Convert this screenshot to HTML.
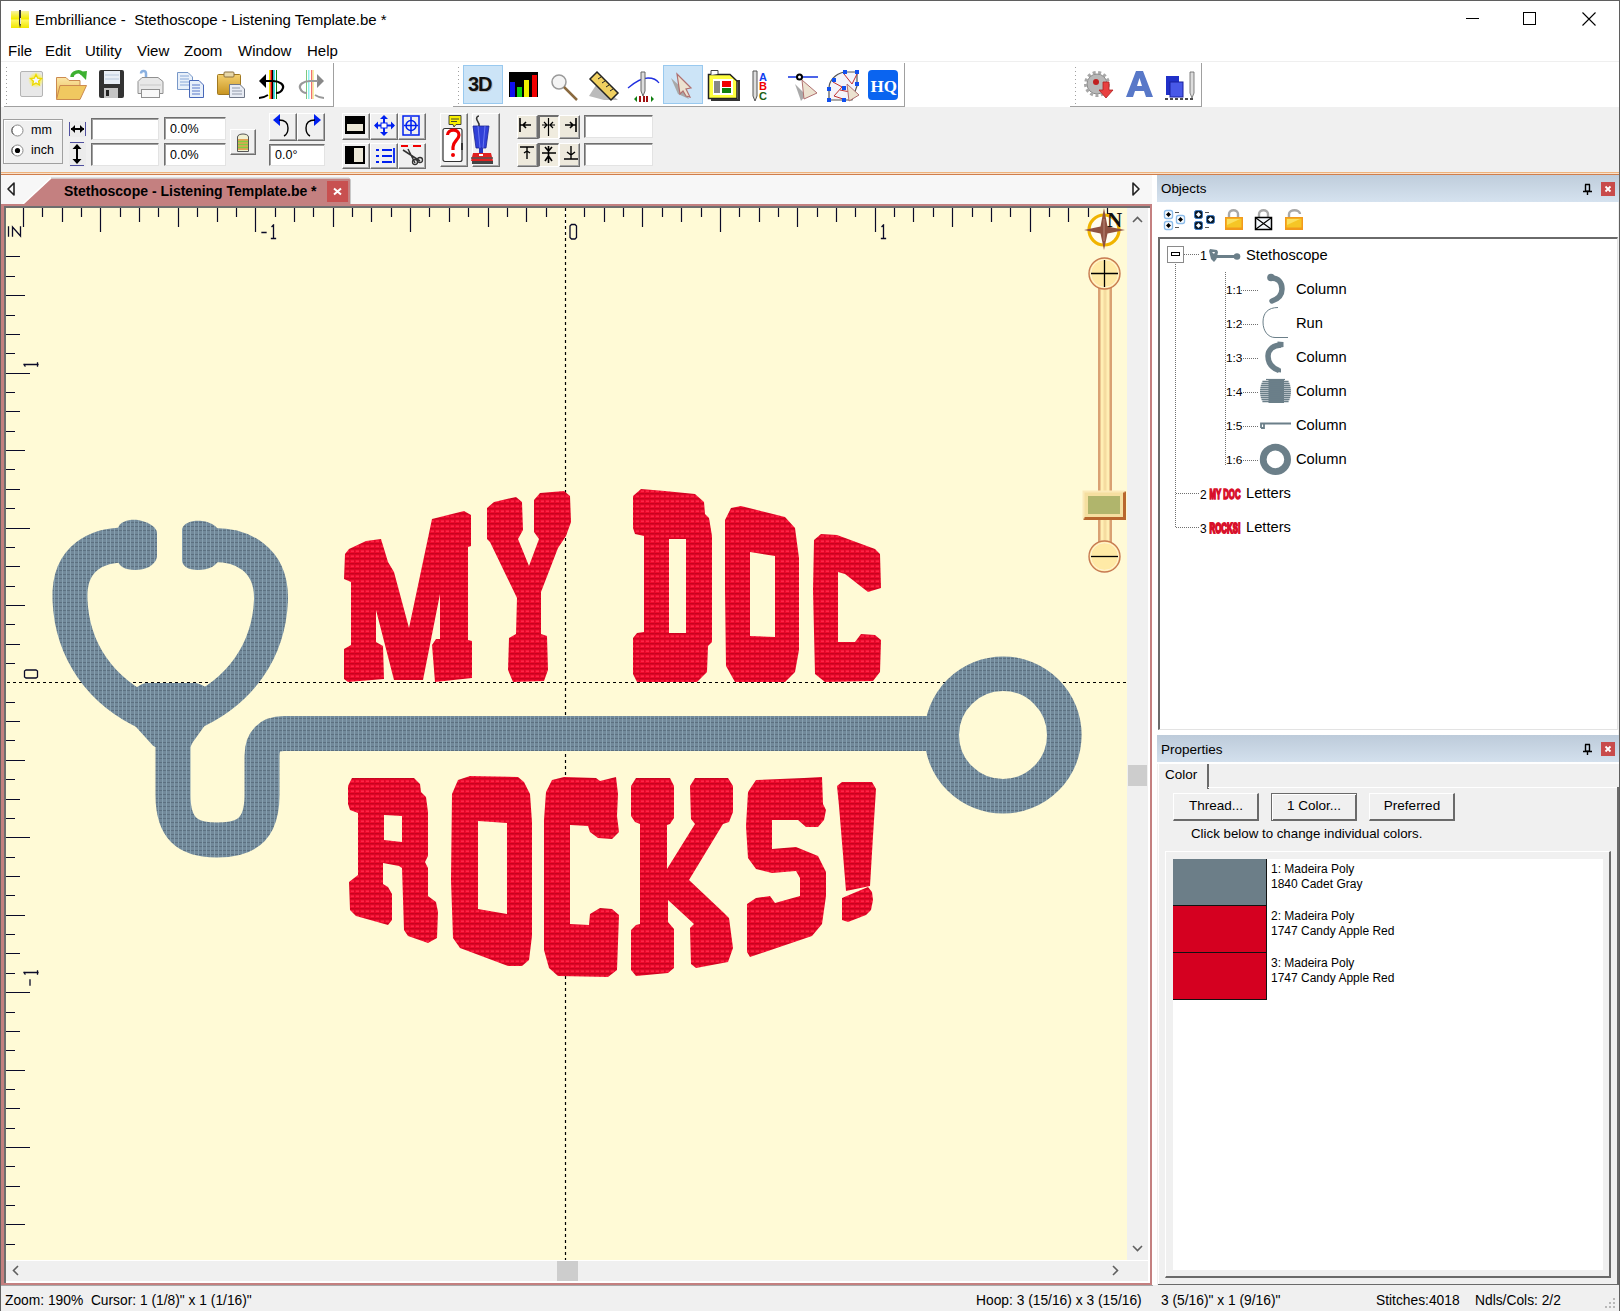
<!DOCTYPE html>
<html><head><meta charset="utf-8">
<style>
*{box-sizing:border-box;margin:0;padding:0}
html,body{width:1620px;height:1311px;overflow:hidden;background:#fff;font-family:"Liberation Sans",sans-serif;color:#000}
.a{position:absolute}
.t{position:absolute;white-space:nowrap;line-height:1}
.btn{position:absolute;background:#f0f0f0;border-top:1px solid #fff;border-left:1px solid #fff;border-right:1px solid #6f6f6f;border-bottom:1px solid #6f6f6f;box-shadow:inset -1px -1px 0 #a8a8a8}
.inp{position:absolute;background:#fff;border-top:1px solid #6f6f6f;border-left:1px solid #6f6f6f;border-right:1px solid #e3e3e3;border-bottom:1px solid #e3e3e3;box-shadow:inset 1px 1px 0 #a0a0a0}
svg{position:absolute;overflow:visible}
</style></head><body>
<!-- window border -->
<div class="a" style="left:0;top:0;width:1620px;height:1311px;border:1px solid #5f5f5f;border-bottom:none"></div>
<!-- title bar -->
<svg style="left:11px;top:10px" width="18" height="18"><defs><linearGradient id="ig" x1="0" y1="0" x2="0" y2="1"><stop offset="0" stop-color="#f8f4a0"/><stop offset="0.45" stop-color="#f4ec00"/><stop offset="0.55" stop-color="#fff860"/><stop offset="1" stop-color="#f0e600"/></linearGradient></defs><rect x="0" y="1" width="18" height="17" fill="url(#ig)"/><path d="M8 0L10 0L10 14L9 18L8 14Z" fill="#333"/><rect x="9" y="8" width="1" height="6" fill="#ddd"/></svg>
<div class="t" style="left:35px;top:12px;font-size:15px">Embrilliance -&nbsp; Stethoscope - Listening Template.be *</div>
<div class="a" style="left:1466px;top:18px;width:13px;height:1px;background:#000"></div>
<div class="a" style="left:1523px;top:12px;width:13px;height:13px;border:1px solid #000"></div>
<svg style="left:1582px;top:12px" width="14" height="14"><path d="M0.5 0.5L13.5 13.5M13.5 0.5L0.5 13.5" stroke="#000" stroke-width="1.1"/></svg>
<!-- menu -->
<div class="t" style="left:8px;top:43px;font-size:15px">File</div>
<div class="t" style="left:45px;top:43px;font-size:15px">Edit</div>
<div class="t" style="left:85px;top:43px;font-size:15px">Utility</div>
<div class="t" style="left:137px;top:43px;font-size:15px">View</div>
<div class="t" style="left:184px;top:43px;font-size:15px">Zoom</div>
<div class="t" style="left:238px;top:43px;font-size:15px">Window</div>
<div class="t" style="left:307px;top:43px;font-size:15px">Help</div>
<!-- toolbar row 1 -->
<div class="a" style="left:1px;top:61px;width:1618px;height:2px;background:#efefef"></div>
<div class="a" style="left:1px;top:62px;width:1618px;height:45px;background:#fff"></div>
<div class="a" style="left:4px;top:63px;width:330px;height:44px;background:#fff;border-right:1px solid #a0a0a0;border-bottom:1px solid #a0a0a0"></div>
<div class="a" style="left:453px;top:63px;width:452px;height:44px;background:#fff;border-right:1px solid #a0a0a0;border-bottom:1px solid #a0a0a0"></div>
<div class="a" style="left:1070px;top:63px;width:132px;height:44px;background:#fff;border-right:1px solid #a0a0a0;border-bottom:1px solid #a0a0a0"></div>
<svg style="left:0;top:0" width="1620" height="120">
<g fill="#a0a0a0">
<path d="M6 67h1v1h-1zM6 71h1v1h-1zM6 75h1v1h-1zM6 79h1v1h-1zM6 83h1v1h-1zM6 87h1v1h-1zM6 91h1v1h-1zM6 95h1v1h-1zM6 99h1v1h-1zM6 103h1v1h-1z"/>
<path d="M458 67h1v1h-1zM458 71h1v1h-1zM458 75h1v1h-1zM458 79h1v1h-1zM458 83h1v1h-1zM458 87h1v1h-1zM458 91h1v1h-1zM458 95h1v1h-1zM458 99h1v1h-1zM458 103h1v1h-1z"/>
<path d="M1075 67h1v1h-1zM1075 71h1v1h-1zM1075 75h1v1h-1zM1075 79h1v1h-1zM1075 83h1v1h-1zM1075 87h1v1h-1zM1075 91h1v1h-1zM1075 95h1v1h-1zM1075 99h1v1h-1zM1075 103h1v1h-1z"/>
</g></svg>
<!-- toolbar row 2 -->
<div class="a" style="left:1px;top:107px;width:1618px;height:65px;background:#f0f0f0"></div>
<div class="a" style="left:1px;top:172px;width:1618px;height:1px;background:#eeb27c"></div>
<div class="a" style="left:1px;top:173px;width:1618px;height:1px;background:#f8e2cc"></div>
<div class="a" style="left:1px;top:174px;width:1618px;height:1px;background:#cf7d4c"></div>
<!-- tab strip -->
<div class="a" style="left:1px;top:175px;width:1151px;height:29px;background:#f7f7f7"></div>
<svg style="left:0;top:175px" width="1152" height="31">
<path d="M23 29 L51 3.5 L349 3.5 L350 4.5 L350 29 Z" fill="#c48080"/>
<path d="M23 29 L51 3" stroke="#ffffff" stroke-width="1.5"/>
<path d="M51 3 L349 3 L350.5 4.5 L350.5 29" stroke="#c8c8c8" stroke-width="1" fill="none"/>
<rect x="327" y="6" width="21" height="21" fill="#c85050"/>
<path d="M334 13.5L341 19.5M341 13.5L334 19.5" stroke="#fff" stroke-width="2"/>
<path d="M14 8 L14 20 L8 14 Z" fill="none" stroke="#222" stroke-width="1.6" stroke-linejoin="round"/>
<path d="M1133 8 L1133 20 L1139 14 Z" fill="none" stroke="#222" stroke-width="1.6" stroke-linejoin="round"/>
</svg>
<div class="t" style="left:64px;top:184px;font-size:14px;font-weight:bold">Stethoscope - Listening Template.be *</div>
<svg style="left:0;top:60px" width="1210" height="50">
<defs>
<radialGradient id="glow"><stop offset="0.5" stop-color="#f8f060"/><stop offset="1" stop-color="#f8f060" stop-opacity="0"/></radialGradient>
<linearGradient id="fold" x1="0" y1="0" x2="0" y2="1"><stop offset="0" stop-color="#fbe6a6"/><stop offset="1" stop-color="#e8b84a"/></linearGradient>
<linearGradient id="gold" x1="0" y1="0" x2="0" y2="1"><stop offset="0" stop-color="#f4d070"/><stop offset="1" stop-color="#c89420"/></linearGradient>
</defs>
<!-- New -->
<rect x="20.5" y="11.5" width="22" height="25" rx="1.5" fill="#e8e8e8" stroke="#b4b4b4"/>
<circle cx="36" cy="20" r="8" fill="url(#glow)"/>
<path d="M36 14.5L37.7 18.2L41.5 18.6L38.6 21.2L39.4 25L36 23L32.6 25L33.4 21.2L30.5 18.6L34.3 18.2Z" fill="#f4f6ff" stroke="#ecd800" stroke-width="1.3"/>
<!-- Open -->
<path d="M56.5 17.5H66L69 20.5H80V38.5H56.5Z" fill="url(#fold)" stroke="#cc8a50"/>
<path d="M60 25.5H86.5L80 39.5H56.5Z" fill="#f0c860" stroke="#cc8a50"/>
<path d="M72 17C72 12 80 10 82 14" stroke="#3cb030" stroke-width="3.5" fill="none"/>
<path d="M78 12L87 11L86 20Z" fill="#3cb030"/>
<!-- Save -->
<rect x="99" y="10" width="25" height="28" rx="2" fill="#333"/>
<rect x="104" y="11" width="16" height="13" fill="#e8eef6"/>
<path d="M105 15H119M105 19H119" stroke="#b8c8dc"/>
<rect x="104" y="28" width="14" height="10" fill="#c4c4c4"/>
<rect x="106" y="30" width="3" height="6" fill="#222"/>
<!-- Print -->
<path d="M141 13.5C141 10 146 10 146 13.5V18" stroke="#8ab0e0" stroke-width="2.5" fill="none"/>
<path d="M138 21.5L142 17.5H158L163 21.5V33.5H138Z" fill="#e8e8e8" stroke="#909090"/>
<rect x="141.5" y="29.5" width="18" height="8" fill="#f8f8f8" stroke="#909090"/>
<path d="M140 25H161" stroke="#c8c8c8"/>
<!-- Copy -->
<path d="M177.5 12.5H188L192.5 17V29.5H177.5Z" fill="#e8f0fa" stroke="#7898c8"/>
<path d="M180 16H189M180 19H189M180 22H189M180 25H189" stroke="#88a8d8"/>
<path d="M189.5 20.5H199L203.5 25V37.5H189.5Z" fill="#e8f0fa" stroke="#4868b8"/>
<path d="M192 25H200M192 28H200M192 31H200M192 34H200" stroke="#5878c8"/>
<!-- Paste -->
<rect x="217.5" y="14.5" width="23" height="20" rx="1" fill="url(#gold)" stroke="#a07820"/>
<rect x="224" y="12" width="10" height="5" rx="1" fill="#e8d8a8" stroke="#8a7040"/>
<path d="M229.5 24.5H240L244.5 29V37.5H229.5Z" fill="#e8ecf4" stroke="#707888"/>
<path d="M232 28H240M232 31H242M232 34H242" stroke="#9098a8"/>
<!-- Reverse 1 -->
<rect x="269" y="10" width="1.5" height="29" fill="#f8e800"/>
<rect x="270.5" y="10" width="1.5" height="29" fill="#e00000"/>
<rect x="272" y="10" width="1.5" height="29" fill="#000"/>
<rect x="273.5" y="10" width="1.5" height="29" fill="#30e8f0"/>
<rect x="276" y="10" width="1" height="29" fill="#108010"/>
<path d="M259 21L266 14V28Z" fill="#000"/>
<path d="M265 21H273C280 21 284 25 283 28C282 31 279 33 276 33" stroke="#000" stroke-width="2.2" fill="none"/>
<path d="M259 38C262 38 265 37 268 35" stroke="#000" stroke-width="1.8" fill="none"/>
<!-- Reverse 2 -->
<rect x="306" y="10" width="1" height="29" fill="#80c880"/>
<rect x="308" y="10" width="1.5" height="29" fill="#90f0f0"/>
<rect x="311" y="10" width="1.5" height="29" fill="#f07070"/>
<rect x="312.5" y="10" width="1.5" height="29" fill="#f8f0a0"/>
<path d="M324 21L317 14V28Z" fill="#888"/>
<path d="M318 21H310C303 21 299 25 300 28C301 31 304 33 307 33" stroke="#999" stroke-width="2.2" fill="none"/>
<path d="M324 38C321 38 318 37 315 35" stroke="#999" stroke-width="1.8" fill="none"/>
<!-- group 2 -->
<rect x="463.5" y="5.5" width="39" height="38" fill="#cce4f7" stroke="#99c9ef"/>
<text x="469" y="32" font-family="Liberation Sans" font-weight="bold" font-size="20" fill="#bbb" letter-spacing="-1">3D</text>
<text x="468" y="31" font-family="Liberation Sans" font-weight="bold" font-size="20" fill="#111" letter-spacing="-1">3D</text>
<rect x="509" y="12" width="29" height="25" fill="#000"/>
<rect x="510" y="22" width="5" height="15" fill="#1010f0"/>
<rect x="517" y="27" width="5" height="10" fill="#10d010"/>
<rect x="524" y="20" width="5" height="17" fill="#f0f000"/>
<rect x="532" y="15" width="5" height="22" fill="#f00000"/>
<circle cx="559" cy="22" r="7" fill="#f4f4f4" stroke="#9a9a9a" stroke-width="1.5"/>
<path d="M564 27L577 40" stroke="#8a6a40" stroke-width="2.5"/>
<path d="M589 36L604 40L618 40L598 22Z" fill="#bbb"/>
<path d="M590 19L597 12L618 33L611 40Z" fill="#f0d060" stroke="#222" stroke-width="1.5"/>
<path d="M598 19L601 17M602 23L605 21M606 27L609 25M610 31L613 29" stroke="#222"/>
<path d="M628 28C635 22 642 18 648 18C653 18 657 20 659 23" stroke="#2030e0" stroke-width="1.3" fill="none"/>
<path d="M641 12V31L643 36L645 31V12Z" fill="#ddd" stroke="#666"/>
<path d="M634 39L637 36V42Z M654 39L651 36V42Z" fill="#108010"/>
<rect x="639" y="36" width="2" height="6" fill="#a01010"/><rect x="643" y="36" width="2" height="6" fill="#a01010"/><rect x="646" y="36" width="2" height="6" fill="#a01010"/>
<rect x="663.5" y="5.5" width="39" height="38" fill="#cce4f7" stroke="#99c9ef"/>
<path d="M671 18L678 34L689 39L684 30Z" fill="#a8a8a8"/>
<path d="M677 14L691 28L686 29L690 37L686 36L683 31L680 34Z" fill="#ece2d0" stroke="#b07070" stroke-width="1.2"/>
<path d="M708.5 14.5H730L737 21V38.5H708.5Z" fill="#ffff40" stroke="#222" stroke-width="1.5"/>
<path d="M711 15V10.5H718V14" stroke="#444" fill="#fff"/>
<path d="M737 21H739V40H712V39" stroke="#333" stroke-width="2" fill="none"/>
<rect x="713" y="19" width="20" height="16" fill="#fff"/>
<path d="M715 21V33M717 21V33M719 21V33" stroke="#111" stroke-width="1"/>
<rect x="722" y="21" width="9" height="6" fill="#f00000"/><rect x="722" y="28" width="9" height="5" fill="#108010"/>
<path d="M753 11H757V36L755 41L753 36Z" fill="#ddd" stroke="#555"/>
<text x="759" y="21" font-family="Liberation Sans" font-weight="bold" font-size="11" fill="#1040f0">A</text>
<text x="759" y="30" font-family="Liberation Sans" font-weight="bold" font-size="11" fill="#f00000">B</text>
<text x="759" y="40" font-family="Liberation Sans" font-weight="bold" font-size="11" fill="#206010">C</text>
<path d="M788 17H818" stroke="#1030e0" stroke-width="1.5"/>
<circle cx="799.5" cy="17" r="2.5" fill="#fff" stroke="#000" stroke-width="2"/>
<path d="M795 24L801 41L806 35Z" fill="#aaa"/>
<path d="M802 20L817 33L804 39Z" fill="#ece2d0" stroke="#b07070"/>
<path d="M829 40V28C829 21 835 14 844 12H857V26L852 40Z" fill="#f4f4fa" stroke="#555" stroke-width="1.2"/>
<path d="M833 22L842 27L834 36L846 40M844 14L852 24L857 14M840 30L850 32" stroke="#c03030" stroke-width="1" fill="none"/>
<g fill="#1050f0"><rect x="827" y="38" width="4" height="4"/><rect x="842" y="38" width="4" height="4"/><rect x="827" y="27" width="4" height="4"/><rect x="842" y="26" width="4" height="4"/><rect x="832" y="18" width="4" height="4"/><rect x="843" y="10" width="4" height="4"/><rect x="855" y="10" width="4" height="4"/><rect x="855" y="22" width="4" height="4"/></g>
<path d="M847 24L859 35L849 41Z" fill="#ece2d0" stroke="#b07070"/>
<rect x="868" y="10" width="30" height="30" rx="4" fill="#0a64f0"/>
<text x="870.5" y="32" font-family="Liberation Serif" font-weight="bold" font-size="17" fill="#fff">HQ</text>
<!-- group 3 -->
<circle cx="1097" cy="24" r="10" fill="#b8b8b8" stroke="#888" stroke-width="1"/>
<circle cx="1097" cy="24" r="11.5" fill="none" stroke="#a8a8a8" stroke-width="3" stroke-dasharray="3 2.5"/>
<circle cx="1096" cy="22" r="3" fill="#c02020"/>
<path d="M1103 22H1109V30H1113L1106 38L1099 30H1103Z" fill="#e84040" stroke="#b02020" stroke-width="0.8"/>
<path d="M1126 37L1136 11H1143L1153 37H1146L1144 31H1135L1133 37Z M1137 26H1142L1139.5 18Z" fill="#5878c8" fill-rule="evenodd"/>
<rect x="1166" y="16" width="13" height="19" fill="#2030c8"/>
<rect x="1170" y="22" width="13" height="15" fill="#4858e8" stroke="#1820a0"/>
<path d="M1190 12V33L1192 38L1194 33V12Z" fill="#ddd" stroke="#666" stroke-width="0.8"/>
<path d="M1165 39H1195" stroke="#111" stroke-width="1.5" stroke-dasharray="3 2"/>
</svg>
<!-- units group -->
<div class="a" style="left:3px;top:119px;width:60px;height:45px;border:1px solid #a0a0a0;box-shadow:inset 1px 1px 0 #fff"></div>
<svg style="left:10px;top:123px" width="16" height="36">
<circle cx="7.5" cy="7.5" r="5.5" fill="#fff" stroke="#8a8a8a" stroke-width="1"/>
<path d="M3.5 11.5A5.5 5.5 0 0 1 3.5 3.5" stroke="#555" fill="none"/>
<circle cx="7.5" cy="27.5" r="5.5" fill="#fff" stroke="#8a8a8a" stroke-width="1"/>
<path d="M3.5 31.5A5.5 5.5 0 0 1 3.5 23.5" stroke="#555" fill="none"/>
<circle cx="7.5" cy="27.5" r="2.6" fill="#000"/>
</svg>
<div class="t" style="left:31px;top:124px;font-size:12.5px">mm</div>
<div class="t" style="left:31px;top:144px;font-size:12.5px">inch</div>
<!-- size icons -->
<svg style="left:68px;top:120px" width="20" height="48">
<rect x="1" y="1" width="17" height="16" fill="#ececec"/>
<path d="M1.5 2V16M17.5 2V16" stroke="#5050a0" stroke-width="1"/>
<path d="M3 9H16" stroke="#000" stroke-width="2"/>
<path d="M3 9L7 5V13Z M16 9L12 5V13Z" fill="#000"/>
<rect x="1" y="22" width="17" height="25" fill="#ececec"/>
<path d="M2 22.5H16M2 45.5H16" stroke="#5050a0" stroke-width="1"/>
<path d="M9 25V43" stroke="#000" stroke-width="2"/>
<path d="M9 24L4.5 29H13.5Z M9 44L4.5 39H13.5Z" fill="#000"/>
</svg>
<div class="inp" style="left:91px;top:118px;width:68px;height:22px"></div>
<div class="inp" style="left:91px;top:143px;width:68px;height:23px"></div>
<div class="inp" style="left:164px;top:117px;width:62px;height:23px"></div>
<div class="inp" style="left:164px;top:143px;width:62px;height:23px"></div>
<div class="t" style="left:170px;top:123px;font-size:12.5px">0.0%</div>
<div class="t" style="left:170px;top:149px;font-size:12.5px">0.0%</div>
<div class="btn" style="left:230px;top:129px;width:26px;height:26px"></div>
<svg style="left:234px;top:131px" width="18" height="22">
<path d="M3.5 6C3.5 2 14.5 2 14.5 6V20.5H3.5Z" fill="#f0f0d0" stroke="#555" stroke-width="1"/>
<path d="M4 9H14M4 12H14M4 15H14M4 18H14" stroke="#e08830" stroke-width="1.6"/>
<path d="M4 10.5H14M4 13.5H14M4 16.5H14" stroke="#80d040" stroke-width="1.4"/>
</svg>
<!-- undo redo -->
<div class="btn" style="left:269px;top:113px;width:28px;height:28px"></div>
<div class="btn" style="left:297px;top:113px;width:28px;height:28px"></div>
<svg style="left:269px;top:113px" width="60" height="30">
<path d="M4 7L11 1V13Z" fill="#0020f0"/>
<path d="M10 7C16 7 19 10 19 15C19 19 17 22 15 23" stroke="#000" stroke-width="1.4" fill="none"/>
<path d="M52 7L45 1V13Z" fill="#0020f0"/>
<path d="M46 7C40 7 37 10 37 15C37 19 39 22 41 23" stroke="#000" stroke-width="1.4" fill="none"/>
</svg>
<div class="inp" style="left:269px;top:144px;width:56px;height:22px"></div>
<div class="t" style="left:275px;top:149px;font-size:12.5px">0.0°</div>
<!-- grid group -->
<div class="btn" style="left:342px;top:113px;width:28px;height:27px"></div>
<div class="btn" style="left:370px;top:113px;width:28px;height:27px"></div>
<div class="btn" style="left:398px;top:113px;width:28px;height:27px"></div>
<div class="btn" style="left:342px;top:143px;width:28px;height:26px"></div>
<div class="btn" style="left:370px;top:143px;width:28px;height:26px"></div>
<div class="btn" style="left:398px;top:143px;width:28px;height:26px"></div>
<svg style="left:342px;top:113px" width="90" height="58">
<rect x="3" y="3" width="20" height="18" fill="#000"/><rect x="5" y="11" width="16" height="7" fill="#ece8d8"/>
<path d="M42 3V22M33 12.5H52" stroke="#0020f0" stroke-width="2"/>
<path d="M42 2L38 6H46Z M42 23L38 19H46Z M32 12.5L36 8.5V16.5Z M53 12.5L49 8.5V16.5Z" fill="#0020f0"/>
<rect x="39" y="10" width="6" height="5" fill="#fff" stroke="#0020f0"/>
<rect x="61" y="3" width="16" height="19" fill="none" stroke="#0020f0" stroke-width="1.5"/>
<circle cx="69" cy="12.5" r="5" fill="none" stroke="#0020f0" stroke-width="1.5"/>
<path d="M69 4V21M62 12.5H76" stroke="#0020f0" stroke-width="1.5"/>
<rect x="3" y="33" width="20" height="18" fill="#000"/><rect x="12" y="35" width="9" height="14" fill="#ece8d8"/>
<path d="M34 37H37M40 37H50M34 43H37M40 43H50M34 49H37M40 49H50M52 35V50" stroke="#0020f0" stroke-width="1.8"/>
<path d="M59 33H66M71 33H79" stroke="#f00000" stroke-width="2"/>
<path d="M61 37L78 48M66 36L73 50" stroke="#333" stroke-width="1.5"/>
<circle cx="73" cy="49" r="2.5" fill="none" stroke="#333" stroke-width="1.3"/><circle cx="78" cy="47" r="2.5" fill="none" stroke="#333" stroke-width="1.3"/>
</svg>
<!-- help & vacuum -->
<div class="btn" style="left:440px;top:113px;width:28px;height:54px"></div>
<div class="btn" style="left:472px;top:113px;width:28px;height:54px"></div>
<svg style="left:440px;top:113px" width="62" height="56">
<rect x="3" y="15.5" width="19" height="33" rx="2" fill="#fff" stroke="#333" stroke-width="1.2"/>
<rect x="21" y="30" width="2" height="7" fill="#333"/>
<path d="M9 2.5H21V11.5H16L14 14L13 11.5H9Z" fill="#f8f000" stroke="#333" stroke-width="0.9"/>
<path d="M11 6H19M11 8.5H17" stroke="#333" stroke-width="0.9"/>
<path d="M7.5 22C7.5 16 19 15 19 22C19 27 13 28 13 34V37" stroke="#f00000" stroke-width="3.2" fill="none"/>
<circle cx="13" cy="42" r="2" fill="#f00000"/>
<path d="M39 3C37 3 36 5 37 7L39 11V14" stroke="#333" stroke-width="1.6" fill="none"/>
<path d="M33 13H49L46 35H36Z" fill="#3040d8" stroke="#1a2490" stroke-width="0.8"/>
<path d="M38 13L40 35M45 13L43 35" stroke="#6a78f0" stroke-width="1"/>
<rect x="39" y="35" width="4" height="5" fill="#2a36b8"/>
<path d="M33 40H51L53 48H31Z" fill="#e02020"/>
<rect x="39" y="41" width="4" height="2" fill="#fff"/>
<path d="M31 45H53" stroke="#555" stroke-width="1.5"/>
<rect x="32" y="48" width="21" height="3" fill="#444"/>
</svg>
<!-- align group -->
<div class="btn" style="left:517px;top:115px;width:21px;height:24px;background:#ede9dc"></div>
<div class="a" style="left:538px;top:115px;width:21px;height:24px;background:#f0ecdf;border-top:2px solid #6f6f6f;border-left:2px solid #6f6f6f;border-right:1px solid #fff;border-bottom:1px solid #fff"></div>
<div class="btn" style="left:559px;top:115px;width:21px;height:24px;background:#ede9dc"></div>
<div class="btn" style="left:517px;top:143px;width:21px;height:24px;background:#ede9dc"></div>
<div class="a" style="left:538px;top:143px;width:21px;height:24px;background:#f0ecdf;border-top:2px solid #6f6f6f;border-left:2px solid #6f6f6f;border-right:1px solid #fff;border-bottom:1px solid #fff"></div>
<div class="btn" style="left:559px;top:143px;width:21px;height:24px;background:#ede9dc"></div>
<svg style="left:517px;top:115px" width="64" height="54">
<path d="M3 3V17M3 10H14M6 10L9 7M6 10L9 13" stroke="#000" stroke-width="1.6" fill="none"/>
<path d="M31.5 3V21M25 10H38M27 7L30 10L27 13M36 7L33 10L36 13" stroke="#000" stroke-width="1.2" fill="none"/>
<path d="M59 3V17M48 10H59M56 10L53 7M56 10L53 13" stroke="#000" stroke-width="1.6" fill="none"/>
<path d="M3 32H17M10 32V44M10 36L7 38M10 36L13 38" stroke="#000" stroke-width="1.4" fill="none"/>
<path d="M25 38H39M31.5 31V48M28 32L31.5 36L35 32M28 46L31.5 41L35 46" stroke="#000" stroke-width="1.6" fill="none"/>
<path d="M47 44H61M54 31V44M54 40L50 37M54 40L58 37" stroke="#000" stroke-width="1.4" fill="none"/>
</svg>
<div class="inp" style="left:584px;top:115px;width:69px;height:23px"></div>
<div class="inp" style="left:584px;top:143px;width:69px;height:23px"></div>
<div class="a" style="left:1px;top:204px;width:1151px;height:81px;background:#c48080"></div>
<div class="a" style="left:1px;top:204px;width:1151px;height:1081px;background:#c48080"></div>
<div class="a" style="left:4px;top:206px;width:1146px;height:1077px;background:#fff;border-left:2px solid #6e6e6e;border-top:2px solid #6e6e6e"></div>
<div class="a" style="left:6px;top:208px;width:1121px;height:1052px;background:#fffad6"></div>
<div class="a" style="left:0;top:175px;width:1px;height:1136px;background:#5f5f5f"></div>
<div class="a" style="left:1127px;top:208px;width:21px;height:1052px;background:#f0f0f0"></div>
<div class="a" style="left:1128px;top:765px;width:19px;height:21px;background:#cdcdcd"></div>
<div class="a" style="left:6px;top:1261px;width:1142px;height:20px;background:#f0f0f0"></div>
<div class="a" style="left:557px;top:1261px;width:21px;height:20px;background:#cdcdcd"></div>
<svg style="left:0;top:0" width="1152" height="1311">
<g stroke="#606060" stroke-width="1.6" fill="none">
<path d="M1133 222 L1137.5 217.5 L1142 222"/>
<path d="M1133 1246 L1137.5 1250.5 L1142 1246"/>
<path d="M18 1266 L13.5 1270.5 L18 1275"/>
<path d="M1113 1266 L1117.5 1270.5 L1113 1275"/>
</g>
<path d="M23.5 208V227M42.5 208V217M62.5 208V222M81.5 208V217M100.5 208V232M120.5 208V217M139.5 208V222M158.5 208V217M178.5 208V227M197.5 208V217M217.5 208V222M236.5 208V217M255.5 208V232M275.5 208V217M294.5 208V222M313.5 208V217M333.5 208V227M352.5 208V217M371.5 208V222M391.5 208V217M410.5 208V232M429.5 208V217M449.5 208V222M468.5 208V217M488.5 208V227M507.5 208V217M526.5 208V222M546.5 208V217M584.5 208V217M604.5 208V222M623.5 208V217M642.5 208V227M662.5 208V217M681.5 208V222M701.5 208V217M720.5 208V232M739.5 208V217M759.5 208V222M778.5 208V217M797.5 208V227M817.5 208V217M836.5 208V222M855.5 208V217M875.5 208V232M894.5 208V217M913.5 208V222M933.5 208V217M952.5 208V227M972.5 208V217M991.5 208V222M1010.5 208V217M1030.5 208V232M1049.5 208V217M1068.5 208V222M1088.5 208V217M1107.5 208V227M6 1244.5H15M6 1224.5H25M6 1205.5H15M6 1186.5H20M6 1166.5H15M6 1147.5H30M6 1128.5H15M6 1108.5H20M6 1089.5H15M6 1070.5H25M6 1050.5H15M6 1031.5H20M6 1012.5H15M6 992.5H30M6 973.5H15M6 953.5H20M6 934.5H15M6 915.5H25M6 895.5H15M6 876.5H20M6 857.5H15M6 837.5H30M6 818.5H15M6 799.5H20M6 779.5H15M6 760.5H25M6 740.5H15M6 721.5H20M6 702.5H15M6 663.5H15M6 644.5H20M6 624.5H15M6 605.5H25M6 586.5H15M6 566.5H20M6 547.5H15M6 528.5H30M6 508.5H15M6 489.5H20M6 469.5H15M6 450.5H25M6 431.5H15M6 411.5H20M6 392.5H15M6 373.5H30M6 353.5H15M6 334.5H20M6 315.5H15M6 295.5H25M6 276.5H15M6 256.5H20" stroke="#0a0a28" stroke-width="1.2"/>
<path d="M565.5 208V236" stroke="#fff" stroke-width="1"/>
<path d="M565.5 208V1260" stroke="#000" stroke-width="1.2" stroke-dasharray="3 3"/>
<path d="M7 682.5H1127" stroke="#000" stroke-width="1.2" stroke-dasharray="3 3"/>
<g stroke="#0a0a28" stroke-width="1.3" fill="none" stroke-linecap="square"><path d="M8.5 227V236M12.5 236V227L20.5 236V227"/><path d="M262 232.5H266M273.5 225V238.5M272 226.5L273.5 225M271.5 238.5H275.5"/><path d="M570 226L571.5 224.5H575L576.5 226V237.5L575 239H571.5L570 237.5Z"/><path d="M883.5 225V238.5M882 226.5L883.5 225M881.5 238.5H885.5"/><path d="M24 364.5H38M24 364.5L25 366M37.5 363V366"/><path d="M24.5 671L26 670H36L37.5 671V677L36 678H26L24.5 677Z"/><path d="M24 972.5H38M24 972.5L25 974M37.5 971V974M30 980V985"/></g>
</svg>
<svg style="left:0;top:0" width="1127" height="1260">
<defs>
<pattern id="rst" width="5" height="5" patternUnits="userSpaceOnUse"><rect width="5" height="5" fill="#ee0a2c"/><rect x="0" y="3" width="5" height="1.5" fill="#c8021f"/><rect x="1" y="0.5" width="3" height="1.5" fill="#ff2446"/><rect x="4" y="0" width="1" height="5" fill="#d80626" opacity="0.7"/></pattern>
<pattern id="gst" width="4" height="4" patternUnits="userSpaceOnUse"><rect width="4" height="4" fill="#72899a"/><rect x="0" y="2" width="4" height="1" fill="#5c7080"/><rect x="2" y="0" width="1" height="4" fill="#86a0b0"/></pattern>
</defs>
<g fill="none" stroke="url(#gst)" stroke-linecap="butt">
<path d="M140,546 C95,540 68,560 70,600 C72,650 100,692 150,714" stroke-width="35"/>
<path d="M200,546 C245,540 272,562 271,600 C269,650 241,692 190,714" stroke-width="34"/>
<path d="M173,740 L173,795 C173,835 195,840 217,840 C240,840 262,835 262,795 L262,756 Q262,733.5 284,733.5 L935,733.5" stroke-width="35" stroke-linejoin="round"/>
<circle cx="1003" cy="735" r="61.3" stroke-width="34.6"/>
</g>
<g fill="url(#gst)">
<path d="M118,528 C120,521 130,519 138,520 C150,522 157,528 157,533 L157,557 C155,566 145,570 135,570 C125,570 118,566 118,560 Z"/>
<path d="M182,529 C184,522 194,520 202,521 C212,522 220,528 220,535 L220,557 C218,566 208,570 198,570 C188,570 182,566 182,560 Z"/>
<path d="M132.5,691 C136,687 141,684 146,683 L196,683 C201,684 205,686 208.6,690 C209,702 208,714 205.5,724.4 L192.6,742.6 L190.4,747 L155.2,747 L153,745.8 L133.8,724.4 C132,713 132,702 132.5,691 Z"/>
</g>
<path fill="url(#rst)" fill-rule="evenodd" d="M345,554 L349,549 L366,541 L381,539 L388,562 L394,572 L409,628 L432,519 L464,511 L471,515 L471,546 L468,547 L468,640 L472,641 L472,678 L435,682 L432,645 L436,639 L440,639 L440,594 L423,680 L394,680 L376,610 L376,642 L383,646 L384,679 L348,682 L344,679 L344,649 L351,645 L351,582 L344,579 ZM487,508 L494,502 L516,497 L522,502 L523,530 L518,539 L529,566 L539,539 L534,532 L534,500 L540,493 L564,491 L570,496 L571,522 L566,536 L558,548 L541,592 L541,634 L547,636 L548,670 L544,681 L513,682 L508,670 L509,638 L516,634 L517,598 L490,542 L487,539 ZM633,496 L641,489 L665,491 L695,494 L704,502 L705,514 L709,518 L712,536 L712,642 L708,646 L707,672 L697,682 L637,682 L633,674 L633,638 L637,633 L644,632 L644,536 L635,534 L633,528 ZM669,539 L686,539 L686,633 L669,633 ZM725,520 L731,508 L741,506 L785,517 L795,528 L799,558 L799,650 L795,672 L785,682 L735,682 L726,666 L725,590 ZM750,552 L775,556 L775,637 L750,636 ZM814,540 L821,534 L837,535 L875,549 L880,554 L881,588 L868,592 L845,574 L838,572 L838,642 L855,642 L861,634 L875,635 L881,640 L880,672 L873,681 L825,682 L815,674 L813,590 ZM348,786 L352,778 L414,778 L420,784 L421,792 L426,797 L428,812 L428,856 L425,862 L428,868 L428,896 L436,902 L438,912 L437,938 L428,943 L408,936 L404,930 L402,868 L399,866 L383,863 L383,884 L388,887 L392,894 L392,920 L388,925 L356,916 L350,910 L349,882 L358,875 L358,813 L350,810 L348,804 ZM384,815 L402,816 L402,842 L384,840 ZM452,794 L458,780 L470,776 L518,777 L524,782 L530,794 L532,822 L532,936 L529,960 L522,966 L508,966 L460,948 L453,938 L451,880 ZM478,821 L507,823 L507,914 L478,909 ZM546,792 L552,780 L564,777 L596,778 L600,781 L616,777 L618,794 L617,816 L619,832 L612,839 L598,838 L590,832 L588,826 L570,825 L570,924 L589,925 L590,914 L600,908 L612,909 L619,915 L617,970 L608,977 L558,976 L549,968 L544,950 L544,820 ZM631,786 L636,778 L670,778 L674,786 L674,818 L670,824 L667,825 L667,869 L695,824 L691,819 L690,786 L695,778 L728,778 L733,786 L733,812 L729,822 L723,824 L689,880 L724,913 L729,918 L733,948 L728,962 L696,968 L691,964 L690,928 L694,924 L668,900 L668,922 L674,929 L674,968 L668,973 L636,976 L631,970 L631,930 L636,925 L640,924 L640,824 L635,822 L631,816 ZM748,792 L756,780 L804,778 L822,777 L823,804 L826,810 L824,820 L818,827 L806,827 L798,820 L772,820 L772,849 L796,847 L818,856 L826,872 L826,896 L822,924 L812,936 L750,957 L747,952 L747,904 L756,898 L770,896 L775,903 L800,896 L800,878 L796,871 L772,873 L756,869 L748,858 L746,826 ZM837,786 L842,782 L872,782 L876,789 L873,836 L870,886 L846,891 L839,806 ZM842,898 L868,887 L872,892 L873,900 L871,910 L866,915 L848,922 L842,920 Z"/>
</svg>
<svg style="left:1080px;top:205px" width="50" height="380">
<!-- compass -->
<circle cx="24" cy="25" r="15" fill="#fffdf0" stroke="#f0b400" stroke-width="3.2"/>
<path d="M24 3 L27.5 21.5 L45 25 L27.5 28.5 L24 45 L20.5 28.5 L4 25 L20.5 21.5 Z" fill="#8e5242"/>
<path d="M24 14V36" stroke="#d8b0a0" stroke-width="0.6"/>
<text x="27" y="21.5" font-family="Liberation Serif" font-weight="bold" font-size="21" fill="#111">N</text>
<!-- track -->
<rect x="18" y="80" width="14" height="260" fill="#d9a173"/>
<rect x="20.5" y="80" width="9" height="260" fill="#ffefb4"/>
<rect x="23.5" y="80" width="3" height="260" fill="#f5dca0"/>
<!-- plus -->
<circle cx="24.5" cy="68.5" r="15.5" fill="#ffeaa6" stroke="#c77a52" stroke-width="1.4"/>
<circle cx="24.5" cy="68.5" r="13.8" fill="none" stroke="#fff4d6" stroke-width="1"/>
<path d="M24.5 55V82M11 68.5H38" stroke="#000" stroke-width="1.3"/>
<!-- minus -->
<circle cx="24.5" cy="351.5" r="15.5" fill="#ffeaa6" stroke="#c77a52" stroke-width="1.4"/>
<circle cx="24.5" cy="351.5" r="13.8" fill="none" stroke="#fff4d6" stroke-width="1"/>
<path d="M11 351.5H38" stroke="#000" stroke-width="1.3"/>
<!-- thumb -->
<rect x="3.5" y="286.5" width="41" height="27" fill="#f5dfa0"/>
<path d="M44.5 286.5V313.5H3.5" stroke="#b8672e" stroke-width="3" fill="none"/>
<path d="M3.5 313.5V286.5H44.5" stroke="#fbe9b8" stroke-width="2" fill="none"/>
<rect x="8" y="291" width="32" height="18" fill="#b0b56c"/>
</svg>
<div class="a" style="left:1152px;top:175px;width:5px;height:1110px;background:#fff"></div>
<div class="a" style="left:1157px;top:175px;width:462px;height:1110px;background:#f0f0f0"></div>
<div class="a" style="left:1619px;top:175px;width:1px;height:1136px;background:#5f5f5f"></div>
<div class="a" style="left:1157px;top:175px;width:462px;height:27px;background:linear-gradient(#bfcddb,#d5e2ef)"></div>
<div class="t" style="left:1161px;top:182px;font-size:13.4px">Objects</div>
<div class="a" style="left:1157px;top:202px;width:461px;height:533px;background:#fff"></div>
<div class="a" style="left:1158px;top:237px;width:460px;height:493px;background:#fff;border-left:2px solid #6a6a6a;border-top:2px solid #6a6a6a;border-right:1px solid #e3e3e3;border-bottom:1px solid #e3e3e3"></div>
<div class="a" style="left:1157px;top:735px;width:462px;height:27px;background:linear-gradient(#bdcbda,#d3e0ed)"></div>
<div class="t" style="left:1161px;top:743px;font-size:13.5px">Properties</div>
<div class="a" style="left:1157px;top:762px;width:462px;height:2px;background:#fff"></div>
<div class="a" style="left:1158px;top:764px;width:51px;height:25px;border-left:1px solid #fff;border-right:2px solid #6a6a6a;background:#f0f0f0"></div>
<div class="t" style="left:1165px;top:768px;font-size:13.5px">Color</div>
<div class="a" style="left:1208px;top:787px;width:411px;height:1px;background:#fff"></div>
<div class="a" style="left:1158px;top:787px;width:1px;height:498px;background:#fff"></div>
<div class="a" style="left:1617px;top:787px;width:2px;height:498px;background:#6a6a6a"></div>
<div class="a" style="left:1158px;top:1284px;width:461px;height:2px;background:#6a6a6a"></div>
<div class="a" style="left:1173px;top:793px;width:86px;height:28px;background:#f0f0f0;border-top:1px solid #fff;border-left:1px solid #fff;border-right:2px solid #6a6a6a;border-bottom:2px solid #6a6a6a"></div>
<div class="t" style="left:1173px;width:86px;text-align:center;top:799px;font-size:13.5px">Thread...</div>
<div class="a" style="left:1271px;top:793px;width:86px;height:28px;background:#f0f0f0;border:1px solid #6a6a6a;box-shadow:inset 1px 1px 0 #fff,inset -1px -1px 0 #6a6a6a"></div>
<div class="t" style="left:1271px;width:86px;text-align:center;top:799px;font-size:13.5px">1 Color...</div>
<div class="a" style="left:1369px;top:793px;width:86px;height:28px;background:#f0f0f0;border-top:1px solid #fff;border-left:1px solid #fff;border-right:2px solid #6a6a6a;border-bottom:2px solid #6a6a6a"></div>
<div class="t" style="left:1369px;width:86px;text-align:center;top:799px;font-size:13.5px">Preferred</div>
<div class="t" style="left:1191px;top:827px;font-size:13.3px">Click below to change individual colors.</div>
<div class="a" style="left:1165px;top:851px;width:446px;height:427px;background:#f0f0f0;border-left:1px solid #fff;border-top:1px solid #fff;border-right:2px solid #6a6a6a;border-bottom:2px solid #6a6a6a"></div>
<div class="a" style="left:1173px;top:859px;width:430px;height:411px;background:#fff"></div>
<div class="a" style="left:1173px;top:859px;width:94px;height:47px;background:#6c7e88;border-right:1px solid #111;border-bottom:1px solid #111"></div>
<div class="a" style="left:1173px;top:906px;width:94px;height:47px;background:#d50020;border-right:1px solid #111;border-bottom:1px solid #111"></div>
<div class="a" style="left:1173px;top:953px;width:94px;height:47px;background:#d50020;border-right:1px solid #111;border-bottom:1px solid #111"></div>
<div class="t" style="left:1271px;top:863px;font-size:12px">1: Madeira Poly</div>
<div class="t" style="left:1271px;top:878px;font-size:12px">1840 Cadet Gray</div>
<div class="t" style="left:1271px;top:910px;font-size:12px">2: Madeira Poly</div>
<div class="t" style="left:1271px;top:925px;font-size:12px">1747 Candy Apple Red</div>
<div class="t" style="left:1271px;top:957px;font-size:12px">3: Madeira Poly</div>
<div class="t" style="left:1271px;top:972px;font-size:12px">1747 Candy Apple Red</div>
<svg style="left:1582px;top:184px" width="11" height="11"><path d="M3 0.5H8M3.5 0.5V7M7.5 0.5V7M1 7.5H10M5.5 7.5V11" stroke="#000" stroke-width="1.4" fill="none"/><rect x="3.5" y="0.5" width="4" height="6.5" fill="none" stroke="#000" stroke-width="1"/></svg>
<div class="a" style="left:1601px;top:182px;width:14px;height:14px;background:#c84b4b"></div>
<svg style="left:1601px;top:182px" width="14" height="14"><path d="M4.5 4.5L9.5 9.5M9.5 4.5L4.5 9.5" stroke="#fff" stroke-width="1.8"/></svg>
<svg style="left:1582px;top:744px" width="11" height="11"><path d="M3 0.5H8M3.5 0.5V7M7.5 0.5V7M1 7.5H10M5.5 7.5V11" stroke="#000" stroke-width="1.4" fill="none"/><rect x="3.5" y="0.5" width="4" height="6.5" fill="none" stroke="#000" stroke-width="1"/></svg>
<div class="a" style="left:1601px;top:742px;width:14px;height:14px;background:#c84b4b"></div>
<svg style="left:1601px;top:742px" width="14" height="14"><path d="M4.5 4.5L9.5 9.5M9.5 4.5L4.5 9.5" stroke="#fff" stroke-width="1.8"/></svg>
<svg style="left:1160px;top:240px" width="460" height="300">
<rect x="7.5" y="6.5" width="16" height="16" fill="#fff" stroke="#8a8a8a"/>
<rect x="11.5" y="12.5" width="8" height="3" fill="none" stroke="#000" stroke-width="1"/>
<path d="M24 14.5h1M26 14.5h1M28 14.5h1M30 14.5h1M32 14.5h1M34 14.5h1M36 14.5h1M38 14.5h1M15.5 24v1M15.5 26v1M15.5 28v1M15.5 30v1M15.5 32v1M15.5 34v1M15.5 36v1M15.5 38v1M15.5 40v1M15.5 42v1M15.5 44v1M15.5 46v1M15.5 48v1M15.5 50v1M15.5 52v1M15.5 54v1M15.5 56v1M15.5 58v1M15.5 60v1M15.5 62v1M15.5 64v1M15.5 66v1M15.5 68v1M15.5 70v1M15.5 72v1M15.5 74v1M15.5 76v1M15.5 78v1M15.5 80v1M15.5 82v1M15.5 84v1M15.5 86v1M15.5 88v1M15.5 90v1M15.5 92v1M15.5 94v1M15.5 96v1M15.5 98v1M15.5 100v1M15.5 102v1M15.5 104v1M15.5 106v1M15.5 108v1M15.5 110v1M15.5 112v1M15.5 114v1M15.5 116v1M15.5 118v1M15.5 120v1M15.5 122v1M15.5 124v1M15.5 126v1M15.5 128v1M15.5 130v1M15.5 132v1M15.5 134v1M15.5 136v1M15.5 138v1M15.5 140v1M15.5 142v1M15.5 144v1M15.5 146v1M15.5 148v1M15.5 150v1M15.5 152v1M15.5 154v1M15.5 156v1M15.5 158v1M15.5 160v1M15.5 162v1M15.5 164v1M15.5 166v1M15.5 168v1M15.5 170v1M15.5 172v1M15.5 174v1M15.5 176v1M15.5 178v1M15.5 180v1M15.5 182v1M15.5 184v1M15.5 186v1M15.5 188v1M15.5 190v1M15.5 192v1M15.5 194v1M15.5 196v1M15.5 198v1M15.5 200v1M15.5 202v1M15.5 204v1M15.5 206v1M15.5 208v1M15.5 210v1M15.5 212v1M15.5 214v1M15.5 216v1M15.5 218v1M15.5 220v1M15.5 222v1M15.5 224v1M15.5 226v1M15.5 228v1M15.5 230v1M15.5 232v1M15.5 234v1M15.5 236v1M15.5 238v1M15.5 240v1M15.5 242v1M15.5 244v1M15.5 246v1M15.5 248v1M15.5 250v1M15.5 252v1M15.5 254v1M15.5 256v1M15.5 258v1M15.5 260v1M15.5 262v1M15.5 264v1M15.5 266v1M15.5 268v1M15.5 270v1M15.5 272v1M15.5 274v1M15.5 276v1M15.5 278v1M15.5 280v1M15.5 282v1M15.5 284v1M15.5 286v1M16 253.5h1M18 253.5h1M20 253.5h1M22 253.5h1M24 253.5h1M26 253.5h1M28 253.5h1M30 253.5h1M32 253.5h1M34 253.5h1M36 253.5h1M38 253.5h1M16 287.5h1M18 287.5h1M20 287.5h1M22 287.5h1M24 287.5h1M26 287.5h1M28 287.5h1M30 287.5h1M32 287.5h1M34 287.5h1M36 287.5h1M38 287.5h1M65.5 32v1M65.5 34v1M65.5 36v1M65.5 38v1M65.5 40v1M65.5 42v1M65.5 44v1M65.5 46v1M65.5 48v1M65.5 50v1M65.5 52v1M65.5 54v1M65.5 56v1M65.5 58v1M65.5 60v1M65.5 62v1M65.5 64v1M65.5 66v1M65.5 68v1M65.5 70v1M65.5 72v1M65.5 74v1M65.5 76v1M65.5 78v1M65.5 80v1M65.5 82v1M65.5 84v1M65.5 86v1M65.5 88v1M65.5 90v1M65.5 92v1M65.5 94v1M65.5 96v1M65.5 98v1M65.5 100v1M65.5 102v1M65.5 104v1M65.5 106v1M65.5 108v1M65.5 110v1M65.5 112v1M65.5 114v1M65.5 116v1M65.5 118v1M65.5 120v1M65.5 122v1M65.5 124v1M65.5 126v1M65.5 128v1M65.5 130v1M65.5 132v1M65.5 134v1M65.5 136v1M65.5 138v1M65.5 140v1M65.5 142v1M65.5 144v1M65.5 146v1M65.5 148v1M65.5 150v1M65.5 152v1M65.5 154v1M65.5 156v1M65.5 158v1M65.5 160v1M65.5 162v1M65.5 164v1M65.5 166v1M65.5 168v1M65.5 170v1M65.5 172v1M65.5 174v1M65.5 176v1M65.5 178v1M65.5 180v1M65.5 182v1M65.5 184v1M65.5 186v1M65.5 188v1M65.5 190v1M65.5 192v1M65.5 194v1M65.5 196v1M65.5 198v1M65.5 200v1M65.5 202v1M65.5 204v1M65.5 206v1M65.5 208v1M65.5 210v1M65.5 212v1M65.5 214v1M65.5 216v1M65.5 218v1M65.5 220v1M65.5 222v1M65.5 224v1M81 50.5h1M83 50.5h1M85 50.5h1M87 50.5h1M89 50.5h1M91 50.5h1M93 50.5h1M95 50.5h1M97 50.5h1M81 84.5h1M83 84.5h1M85 84.5h1M87 84.5h1M89 84.5h1M91 84.5h1M93 84.5h1M95 84.5h1M97 84.5h1M81 118.5h1M83 118.5h1M85 118.5h1M87 118.5h1M89 118.5h1M91 118.5h1M93 118.5h1M95 118.5h1M97 118.5h1M81 152.5h1M83 152.5h1M85 152.5h1M87 152.5h1M89 152.5h1M91 152.5h1M93 152.5h1M95 152.5h1M97 152.5h1M81 186.5h1M83 186.5h1M85 186.5h1M87 186.5h1M89 186.5h1M91 186.5h1M93 186.5h1M95 186.5h1M97 186.5h1M81 220.5h1M83 220.5h1M85 220.5h1M87 220.5h1M89 220.5h1M91 220.5h1M93 220.5h1M95 220.5h1M97 220.5h1" stroke="#707070" stroke-width="1"/>
<g fill="#6b7f89" stroke="#6b7f89">
<path d="M55 16.5H77" stroke-width="3"/><circle cx="77" cy="16.5" r="3.3" stroke="none"/><path d="M49 11L50 9L57 10L58 12L56.5 19L54 22L51 19Z" stroke="none"/><path d="M52 12L55 12L54 14Z" fill="#fff" stroke="none"/>
</g>
<path d="M111 38C119 38 122 43 122 49C122 56 118 59 112 61" stroke="#6b7f89" stroke-width="5.5" fill="none" stroke-linecap="round"/><circle cx="111" cy="37.5" r="3.8" fill="#6b7f89"/>
<path d="M118 67.5C108 67.5 103 73 103 82C103 91 108 97.5 115 97.5L128 97.5" stroke="#6b7f89" stroke-width="1" fill="none"/>
<path d="M121 105C113 105 108 110 108 116C108 123 112 128 119 130.5" stroke="#6b7f89" stroke-width="5.5" fill="none"/><path d="M117.5 101.5L123.5 102L123.5 107L118 108Z" fill="#6b7f89"/><path d="M117 128L121 128.5L121 132.5L117 132Z" fill="#6b7f89"/>
<rect x="108.5" y="139" width="15.5" height="24" fill="#6b7f89"/><path d="M106 139.5H125" stroke="#6b7f89" stroke-width="1.2"/><path d="M102.4 141.5H128.6M101.5 143.5H129.5M100.8 145.5H130.2M100.4 147.5H130.6M100.1 149.5H130.9M100.0 151.5H131.0M100.1 153.5H130.9M100.4 155.5H130.6M100.8 157.5H130.2M101.5 159.5H129.5M102.4 161.5H128.6" stroke="#6b7f89" stroke-width="1.3" fill="none"/>
<path d="M101 188V183.5H131M101 188H104V184" stroke="#6b7f89" stroke-width="1.8" fill="none"/>
<circle cx="115.4" cy="219.4" r="12.2" fill="none" stroke="#6b7f89" stroke-width="6.8"/>
<text x="40" y="259" font-size="12" fill="#000">2</text><text x="40" y="293" font-size="12" fill="#000">3</text>
<text x="49.5" y="258.5" font-family="Liberation Sans" font-weight="bold" font-size="14" textLength="31" lengthAdjust="spacingAndGlyphs" fill="#d8102a" stroke="#d8102a" stroke-width="1.6">MY DOC</text><text x="49.5" y="292.5" font-family="Liberation Sans" font-weight="bold" font-size="15" textLength="31" lengthAdjust="spacingAndGlyphs" fill="#d8102a" stroke="#d8102a" stroke-width="2">ROCKS!</text>
</svg>
<div class="t" style="left:1200px;top:250px;font-size:12.5px">1</div>
<div class="t" style="left:1246px;top:248.4px;font-size:14.7px">Stethoscope</div>
<div class="t" style="left:1226px;top:284.8px;font-size:11.8px">1:1</div>
<div class="t" style="left:1296px;top:282.4px;font-size:14.7px">Column</div>
<div class="t" style="left:1226px;top:318.8px;font-size:11.8px">1:2</div>
<div class="t" style="left:1296px;top:316.4px;font-size:14.7px">Run</div>
<div class="t" style="left:1226px;top:352.8px;font-size:11.8px">1:3</div>
<div class="t" style="left:1296px;top:350.4px;font-size:14.7px">Column</div>
<div class="t" style="left:1226px;top:386.8px;font-size:11.8px">1:4</div>
<div class="t" style="left:1296px;top:384.4px;font-size:14.7px">Column</div>
<div class="t" style="left:1226px;top:420.8px;font-size:11.8px">1:5</div>
<div class="t" style="left:1296px;top:418.4px;font-size:14.7px">Column</div>
<div class="t" style="left:1226px;top:454.8px;font-size:11.8px">1:6</div>
<div class="t" style="left:1296px;top:452.4px;font-size:14.7px">Column</div>
<div class="t" style="left:1246px;top:486.4px;font-size:14.7px">Letters</div>
<div class="t" style="left:1246px;top:520.4px;font-size:14.7px">Letters</div>
<svg style="left:1160px;top:206px" width="150" height="28">
<rect x="4.5" y="4.5" width="8" height="8" rx="2" fill="#fff" stroke="#8cbcea" stroke-width="1.4"/><path d="M8.5 6.0l2.5 2.5l-2.5 2.5l-2.5-2.5z" fill="#000"/><rect x="4.5" y="15.5" width="8" height="8" rx="2" fill="#fff" stroke="#8cbcea" stroke-width="1.4"/><path d="M8.5 17.0l2.5 2.5l-2.5 2.5l-2.5-2.5z" fill="#000"/><rect x="16.5" y="9.5" width="8" height="8" rx="2" fill="#fff" stroke="#8cbcea" stroke-width="1.4"/><path d="M20.5 11.0l2.5 2.5l-2.5 2.5l-2.5-2.5z" fill="#000"/>
<path d="M15 6.5h4M15 21.5h4" stroke="#555" stroke-width="1.2"/>
<rect x="34.5" y="4.5" width="8" height="8" rx="2" fill="#0a1a2a" stroke="#3a78c0" stroke-width="1"/><path d="M38.5 6.0l2.5 2.5l-2.5 2.5l-2.5-2.5z" fill="#fff"/><rect x="34.5" y="15.5" width="8" height="8" rx="2" fill="#0a1a2a" stroke="#3a78c0" stroke-width="1"/><path d="M38.5 17.0l2.5 2.5l-2.5 2.5l-2.5-2.5z" fill="#fff"/><rect x="46.5" y="9.5" width="8" height="8" rx="2" fill="#0a1a2a" stroke="#3a78c0" stroke-width="1"/><path d="M50.5 11.0l2.5 2.5l-2.5 2.5l-2.5-2.5z" fill="#fff"/>
<path d="M45 6.5h4M45 21.5h4" stroke="#555" stroke-width="1.2"/>
<path d="M69 12V8C69 3 78 3 78 8V12" stroke="#a8a8a8" stroke-width="2.4" fill="none"/><rect x="65" y="11" width="18" height="13" fill="#f29a1c"/><rect x="66.5" y="12.5" width="15" height="9" fill="#f6c626"/><path d="M67 13H80L67 19Z" fill="#fae060"/><path d="M99 12V8C99 3 108 3 108 8V12" stroke="#a8a8a8" stroke-width="2.4" fill="none"/><rect x="95.5" y="11.5" width="16" height="12" fill="#f4f8fc" stroke="#000" stroke-width="1.5"/><path d="M96 12L111 23M111 12L96 23" stroke="#000" stroke-width="1.2"/><path d="M129 12V8C129 3 140 3 140 8" stroke="#a8a8a8" stroke-width="2.4" fill="none"/><rect x="125" y="11" width="18" height="13" fill="#f29a1c"/><rect x="126.5" y="12.5" width="15" height="9" fill="#f6c626"/><path d="M127 13H140L127 19Z" fill="#fae060"/>
</svg>
<div class="a" style="left:1px;top:1285px;width:1618px;height:26px;background:#f0f0f0"></div>
<div class="a" style="left:1px;top:1285px;width:1152px;height:1px;background:#a8a8a8"></div>
<div class="t" style="left:5px;top:1294px;font-size:13.8px">Zoom: 190%&nbsp; Cursor: 1 (1/8)" x 1 (1/16)"</div>
<div class="t" style="left:976px;top:1294px;font-size:13.8px">Hoop: 3 (15/16) x 3 (15/16)</div>
<div class="t" style="left:1161px;top:1294px;font-size:13.8px">3 (5/16)" x 1 (9/16)"</div>
<div class="t" style="left:1376px;top:1294px;font-size:13.8px">Stitches:4018</div>
<div class="t" style="left:1475px;top:1294px;font-size:13.8px">Ndls/Cols: 2/2</div>
<svg style="left:1604px;top:1297px" width="12" height="12"><g fill="#b8b8b8"><rect x="9" y="1" width="2" height="2"/><rect x="5" y="5" width="2" height="2"/><rect x="9" y="5" width="2" height="2"/><rect x="1" y="9" width="2" height="2"/><rect x="5" y="9" width="2" height="2"/><rect x="9" y="9" width="2" height="2"/></g></svg>
</body></html>
